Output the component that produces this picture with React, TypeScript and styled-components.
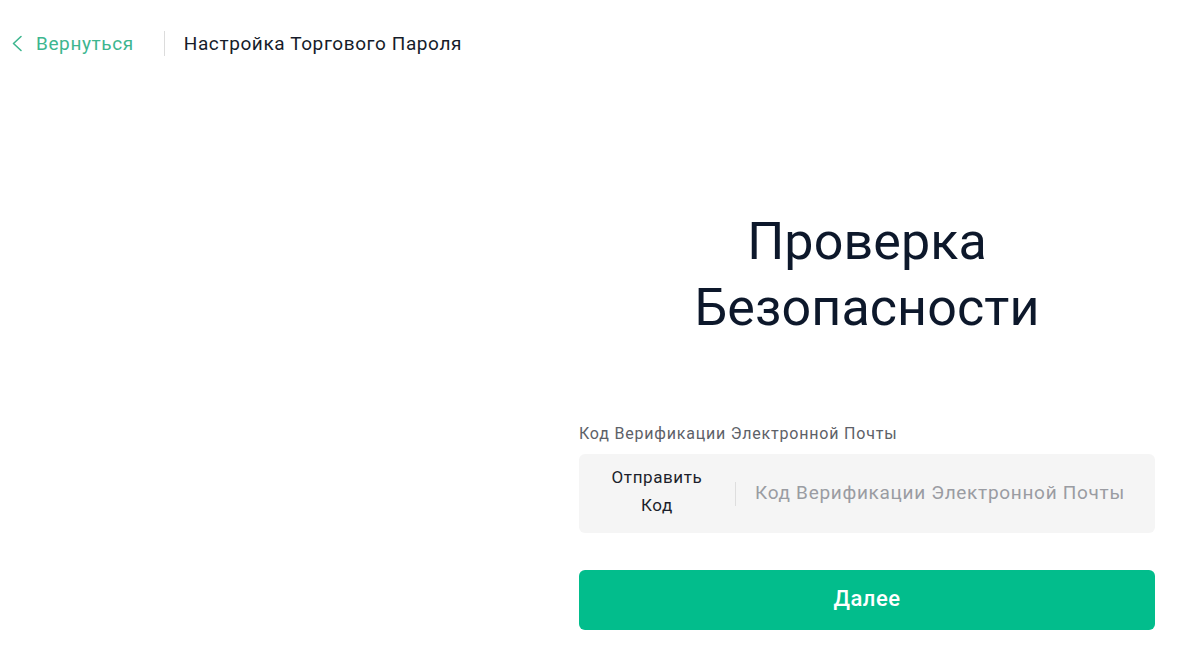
import React from "react";
import styled, { createGlobalStyle } from "styled-components";

const GlobalStyle = createGlobalStyle`
  html, body {
    margin: 0;
    padding: 0;
    background: #fff;
    font-family: Roboto, "Noto Sans", "DejaVu Sans", sans-serif;
  }
  * { box-sizing: border-box; }
`;

const Page = styled.div`
  width: 100%;
  min-height: 659px;
  background: #fff;
`;

const Header = styled.header`
  display: flex;
  align-items: center;
  height: 86px;
  padding: 0 11px;
`;

const BackLink = styled.a`
  display: flex;
  align-items: center;
  gap: 12px;
  color: #3db68f;
  font-size: 19px;
  letter-spacing: 0.6px;
  text-decoration: none;
  cursor: pointer;
`;

const Divider = styled.span`
  width: 1px;
  height: 25px;
  background: #dcdcdc;
  margin: 0 19px 0 30px;
`;

const PageTitle = styled.h1`
  margin: 0;
  font-size: 19px;
  font-weight: 400;
  letter-spacing: 0.6px;
  color: #161c2a;
`;

const Main = styled.main`
  display: grid;
  grid-template-columns: 1fr 576px;
  padding-right: 40px;
`;

const Form = styled.section`
  grid-column: 2;
  display: flex;
  flex-direction: column;
  padding-top: 123px;
`;

const Heading = styled.h2`
  margin: 0 0 83px;
  text-align: center;
  font-size: 52px;
  line-height: 66px;
  font-weight: 400;
  letter-spacing: 0.1px;
  color: #0d182b;
`;

const Label = styled.label`
  font-size: 16px;
  line-height: 20px;
  letter-spacing: 0.8px;
  color: #5d6168;
  margin-bottom: 10px;
`;

const InputBox = styled.div`
  display: flex;
  align-items: center;
  height: 79px;
  background: #f5f5f5;
  border-radius: 6px;
`;

const SendButton = styled.button`
  width: 156px;
  flex-shrink: 0;
  border: none;
  background: transparent;
  font-family: inherit;
  font-size: 17px;
  line-height: 28px;
  letter-spacing: 0.6px;
  color: #1c1f2b;
  padding: 0 20px 5px;
  cursor: pointer;
`;

const InputDivider = styled.span`
  width: 1px;
  height: 24px;
  background: #dedede;
`;

const CodeInput = styled.input`
  flex: 1;
  min-width: 0;
  height: 100%;
  border: none;
  background: transparent;
  outline: none;
  padding: 0 19px 2px;
  font-family: inherit;
  font-size: 19px;
  letter-spacing: 0.7px;
  color: #1c1f2b;
  &::placeholder {
    color: #9a9ca2;
  }
`;

const SubmitButton = styled.button`
  margin-top: 37px;
  height: 60px;
  border: none;
  border-radius: 6px;
  background: #02bd8c;
  color: #fff;
  font-family: inherit;
  font-size: 22px;
  font-weight: 500;
  letter-spacing: 0.5px;
  padding-bottom: 4px;
  cursor: pointer;
`;

const Chevron = () => (
  <svg width="13" height="17" viewBox="0 0 13 17" fill="none">
    <path d="M10 1.5 L2.5 8.5 L10 15.5" stroke="#3db68f" strokeWidth="1.6" strokeLinecap="round" strokeLinejoin="round" />
  </svg>
);

export default function App() {
  return (
    <Page>
      <GlobalStyle />
      <Header>
        <BackLink>
          <Chevron />
          Вернуться
        </BackLink>
        <Divider />
        <PageTitle>Настройка Торгового Пароля</PageTitle>
      </Header>
      <Main>
        <Form>
          <Heading>
            Проверка
            <br />
            Безопасности
          </Heading>
          <Label>Код Верификации Электронной Почты</Label>
          <InputBox>
            <SendButton>Отправить Код</SendButton>
            <InputDivider />
            <CodeInput placeholder="Код Верификации Электронной Почты" />
          </InputBox>
          <SubmitButton>Далее</SubmitButton>
        </Form>
      </Main>
    </Page>
  );
}
